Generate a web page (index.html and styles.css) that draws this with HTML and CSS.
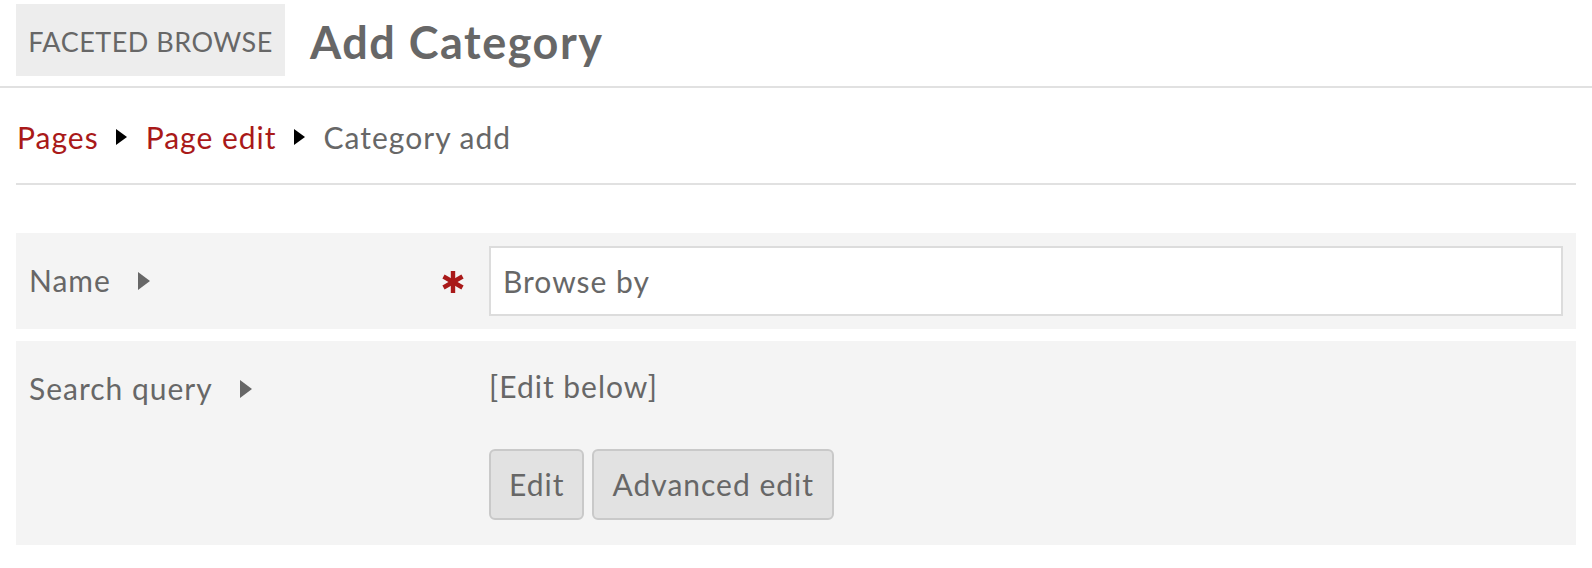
FILE: index.html
```html
<!DOCTYPE html>
<html lang="en">
<head>
<meta charset="utf-8">
<title>Add Category</title>
<link rel="stylesheet" href="styles.css">
</head>
<body>
<header class="page-header">
  <div class="module-tag">FACETED BROWSE</div>
  <h1 class="title">Add Category</h1>
</header>

<nav class="breadcrumbs">
  <a href="#" class="crumb-link">Pages</a>
  <svg class="crumb-sep" width="11" height="16" viewBox="0 0 11 16"><polygon points="0,0 11,8 0,16" fill="#000"/></svg>
  <a href="#" class="crumb-link">Page edit</a>
  <svg class="crumb-sep" width="11" height="16" viewBox="0 0 11 16"><polygon points="0,0 11,8 0,16" fill="#000"/></svg>
  <span class="crumb-current">Category add</span>
</nav>

<form class="form">
  <div class="field">
    <div class="field-meta">
      <span class="label">Name</span>
      <svg class="label-toggle" width="12" height="18" viewBox="0 0 12 18"><polygon points="0,0 12,9 0,18" fill="#676767"/></svg>
      <svg class="required" width="22" height="22" viewBox="0 0 22 22">
        <g stroke="#a91919" stroke-width="4.4" stroke-linecap="butt">
          <line x1="11" y1="0" x2="11" y2="22"/>
          <line x1="1.5" y1="5.5" x2="20.5" y2="16.5"/>
          <line x1="1.5" y1="16.5" x2="20.5" y2="5.5"/>
        </g>
      </svg>
    </div>
    <div class="field-input">
      <input class="text-input" type="text" value="Browse by">
    </div>
  </div>

  <div class="field">
    <div class="field-meta">
      <span class="label">Search query</span>
      <svg class="label-toggle" width="12" height="18" viewBox="0 0 12 18"><polygon points="0,0 12,9 0,18" fill="#676767"/></svg>
    </div>
    <div class="field-input">
      <div class="query-note">[Edit below]</div>
      <div class="button-group">
        <button type="button" class="button">Edit</button>
        <button type="button" class="button">Advanced edit</button>
      </div>
    </div>
  </div>
</form>
</body>
</html>
```

FILE: styles.css
```css
* {
  box-sizing: border-box;
}

html, body {
  margin: 0;
  padding: 0;
  background: #ffffff;
}

body {
  font-family: Lato, "Open Sans", "Liberation Sans", sans-serif;
  color: #676767;
  font-size: 30px;
  letter-spacing: 1px;
}

.page-header {
  display: flex;
  align-items: center;
  gap: 25px;
  padding: 4px 16px 10px 16px;
  border-bottom: 2px solid #e1e1e1;
}

.module-tag {
  background: #ededed;
  height: 72px;
  width: 269px;
  display: flex;
  align-items: center;
  justify-content: center;
  padding-top: 2px;
  font-size: 27px;
  letter-spacing: 0.5px;
  color: #676767;
  white-space: nowrap;
}

.title {
  margin: 0;
  font-size: 45px;
  letter-spacing: 1.5px;
  font-weight: 700;
  color: #676767;
  line-height: 54px;
  padding-top: 4px;
}

.breadcrumbs {
  display: flex;
  align-items: center;
  margin: 0 16px;
  padding: 29px 0 26px 1px;
  line-height: 40px;
  border-bottom: 2px solid #e1e1e1;
}

.crumb-link {
  color: #a91919;
  text-decoration: none;
}

.crumb-current {
  color: #676767;
}

.crumb-sep {
  margin: 0 19px 0 17px;
  flex: none;
}

.form {
  margin: 48px 16px 0 16px;
  display: flex;
  flex-direction: column;
  gap: 12px;
}

.field {
  display: flex;
  background: #f4f4f4;
  padding: 13px 13px 13px 13px;
}

.field-meta {
  width: 460px;
  flex: none;
  display: flex;
  align-items: flex-start;
  padding-top: 14px;
  line-height: 40px;
}

.label {
  color: #676767;
}

.label-toggle {
  margin: 12px 0 0 27px;
  flex: none;
}

.required {
  margin: 11px 25px 0 auto;
  flex: none;
}

.field-input {
  flex: 1;
  min-width: 0;
}

.text-input {
  display: block;
  width: 100%;
  height: 70px;
  border: 2px solid #dcdcdc;
  background: #ffffff;
  padding: 0 12px;
  font-family: inherit;
  font-size: 30px;
  letter-spacing: 1px;
  color: #676767;
  outline: none;
}

.query-note {
  padding-top: 12px;
  line-height: 40px;
}

.button-group {
  display: flex;
  gap: 8px;
  margin-top: 43px;
  margin-bottom: 12px;
}

.button {
  font-family: inherit;
  font-size: 30px;
  letter-spacing: 1px;
  color: #676767;
  background: #e2e2e2;
  border: 2px solid #c9c9c9;
  border-radius: 6px;
  padding: 14px 18px;
  line-height: 39px;
  cursor: pointer;
}
```
